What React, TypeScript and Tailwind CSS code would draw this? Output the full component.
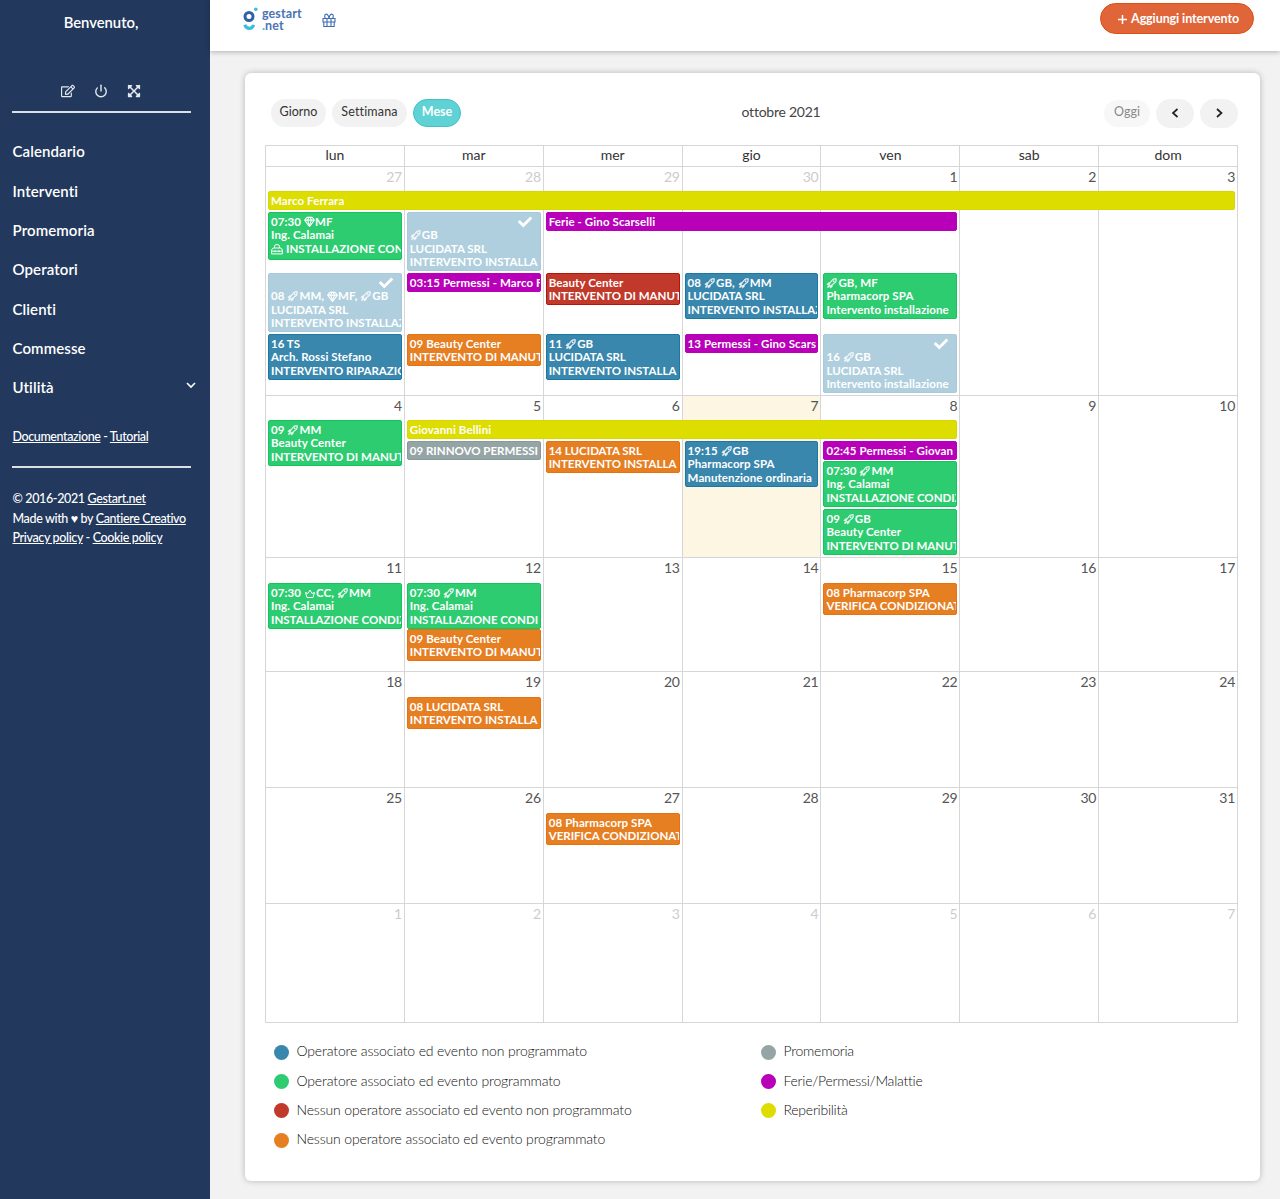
import React from "react";
import { clsx } from "clsx";
import { Gem, Power } from "lucide-react";
import { FaCheck, FaExpandArrowsAlt, FaRegEdit } from "react-icons/fa";
import { LiaRocketSolid } from "react-icons/lia";

type EventColor = "blue" | "green" | "red" | "orange" | "gray" | "purple" | "yellow" | "done";

type CalendarEvent = {
    place: string;
    color: EventColor;
    lines: string[];
    height?: string;
};

type Week = {
    days: number[];
    rows: string;
    today?: number;
    events: CalendarEvent[];
};

const colors: Record<EventColor, string> = {
    blue: "bg-[#3a87ad] border-[#1a78a4]",
    green: "bg-[#2ecc71] border-[#12c65c]",
    red: "bg-[#c0392b] border-[#b51509]",
    orange: "bg-[#e67e22] border-[#e67210]",
    gray: "bg-[#95a5a6] border-[#869a9b]",
    purple: "bg-[#b700b8] border-[#b700b8]",
    yellow: "bg-[#dddd00] border-[#d8d800]",
    done: "bg-[#b0cfde] border-[#a8cadb]",
};

const dayNames = ["lun", "mar", "mer", "gio", "ven", "sab", "dom"];

const columns = [
    "col-start-1",
    "col-start-2",
    "col-start-3",
    "col-start-4",
    "col-start-5",
    "col-start-6",
    "col-start-7",
];

// [r] rocket, [g] gem, [t] toolbox, [c] crown
const weeks: Week[] = [
    {
        days: [27, 28, 29, 30, 1, 2, 3],
        rows: "h-[229px] grid-rows-[24px_21px_61px_61px_1fr]",
        events: [
            { place: "col-start-1 col-span-7 row-start-2", color: "yellow", lines: ["Marco Ferrara"] },
            { place: "col-start-1 row-start-3", color: "green", lines: ["07:30 [g]MF", "Ing. Calamai", "[t] INSTALLAZIONE CON"], height: "h-12" },
            { place: "col-start-2 row-start-3", color: "done", lines: ["[r]GB", "LUCIDATA SRL", "INTERVENTO INSTALLA"] },
            { place: "col-start-3 col-span-3 row-start-3", color: "purple", lines: ["Ferie - Gino Scarselli"] },
            { place: "col-start-1 row-start-4", color: "done", lines: ["08 [r]MM, [g]MF, [r]GB", "LUCIDATA SRL", "INTERVENTO INSTALLAZ"] },
            { place: "col-start-2 row-start-4", color: "purple", lines: ["03:15 Permessi - Marco F"] },
            { place: "col-start-3 row-start-4", color: "red", lines: ["Beauty Center", "INTERVENTO DI MANUT"] },
            { place: "col-start-4 row-start-4", color: "blue", lines: ["08 [r]GB, [r]MM", "LUCIDATA SRL", "INTERVENTO INSTALLAZ"] },
            { place: "col-start-5 row-start-4", color: "green", lines: ["[r]GB, MF", "Pharmacorp SPA", "Intervento installazione"] },
            { place: "col-start-1 row-start-5", color: "blue", lines: ["16 TS", "Arch. Rossi Stefano", "INTERVENTO RIPARAZIO"] },
            { place: "col-start-2 row-start-5", color: "orange", lines: ["09 Beauty Center", "INTERVENTO DI MANUT"] },
            { place: "col-start-3 row-start-5", color: "blue", lines: ["11 [r]GB", "LUCIDATA SRL", "INTERVENTO INSTALLA"] },
            { place: "col-start-4 row-start-5", color: "purple", lines: ["13 Permessi - Gino Scars"] },
            { place: "col-start-5 row-start-5", color: "done", lines: ["16 [r]GB", "LUCIDATA SRL", "Intervento installazione"] },
        ],
    },
    {
        days: [4, 5, 6, 7, 8, 9, 10],
        rows: "h-[162px] grid-rows-[24px_21px_20px_48px_1fr]",
        today: 3,
        events: [
            { place: "col-start-1 row-start-2", color: "green", lines: ["09 [r]MM", "Beauty Center", "INTERVENTO DI MANUT"] },
            { place: "col-start-2 col-span-4 row-start-2", color: "yellow", lines: ["Giovanni Bellini"] },
            { place: "col-start-2 row-start-3", color: "gray", lines: ["09 RINNOVO PERMESSI"] },
            { place: "col-start-3 row-start-3", color: "orange", lines: ["14 LUCIDATA SRL", "INTERVENTO INSTALLA"] },
            { place: "col-start-4 row-start-3", color: "blue", lines: ["19:15 [r]GB", "Pharmacorp SPA", "Manutenzione ordinaria"] },
            { place: "col-start-5 row-start-3", color: "purple", lines: ["02:45 Permessi - Giovan"] },
            { place: "col-start-5 row-start-4", color: "green", lines: ["07:30 [r]MM", "Ing. Calamai", "INSTALLAZIONE CONDIZ"] },
            { place: "col-start-5 row-start-5", color: "green", lines: ["09 [r]GB", "Beauty Center", "INTERVENTO DI MANUT"] },
        ],
    },
    {
        days: [11, 12, 13, 14, 15, 16, 17],
        rows: "h-[114px] grid-rows-[25px_46px_1fr]",
        events: [
            { place: "col-start-1 row-start-2", color: "green", lines: ["07:30 [c]CC, [r]MM", "Ing. Calamai", "INSTALLAZIONE CONDIZ"] },
            { place: "col-start-2 row-start-2", color: "green", lines: ["07:30 [r]MM", "Ing. Calamai", "INSTALLAZIONE CONDI"] },
            { place: "col-start-5 row-start-2", color: "orange", lines: ["08 Pharmacorp SPA", "VERIFICA CONDIZIONAT"] },
            { place: "col-start-2 row-start-3", color: "orange", lines: ["09 Beauty Center", "INTERVENTO DI MANUT"] },
        ],
    },
    {
        days: [18, 19, 20, 21, 22, 23, 24],
        rows: "h-[116px] grid-rows-[25px_1fr]",
        events: [{ place: "col-start-2 row-start-2", color: "orange", lines: ["08 LUCIDATA SRL", "INTERVENTO INSTALLA"] }],
    },
    {
        days: [25, 26, 27, 28, 29, 30, 31],
        rows: "h-[116px] grid-rows-[25px_1fr]",
        events: [{ place: "col-start-3 row-start-2", color: "orange", lines: ["08 Pharmacorp SPA", "VERIFICA CONDIZIONAT"] }],
    },
    {
        days: [1, 2, 3, 4, 5, 6, 7],
        rows: "h-[119px] grid-rows-[25px_1fr]",
        events: [],
    },
];

const legend = [
    [
        { label: "Operatore associato ed evento non programmato", dot: "bg-[#3a87ad]" },
        { label: "Operatore associato ed evento programmato", dot: "bg-[#2ecc71]" },
        { label: "Nessun operatore associato ed evento non programmato", dot: "bg-[#c0392b]" },
        { label: "Nessun operatore associato ed evento programmato", dot: "bg-[#e67e22]" },
    ],
    [
        { label: "Promemoria", dot: "bg-[#95a5a6]" },
        { label: "Ferie/Permessi/Malattie", dot: "bg-[#b700b8]" },
        { label: "Reperibilità", dot: "bg-[#dddd00]" },
    ],
];

const icons: Record<string, React.ReactNode> = {
    "[r]": <LiaRocketSolid className="inline w-3 h-3 -mt-0.5 stroke-current stroke-1" />,
    "[g]": <Gem className="inline w-[11px] h-[11px] -mt-0.5" strokeWidth={2.4} />,
    "[t]": (
        <svg className="inline w-3 h-3 -mt-0.5" viewBox="0 0 12 12" fill="none" stroke="currentColor">
            <path d="M3.5 5V3.5a2.5 2 0 0 1 5 0V5M.6 10.900V7L2 5h8l1.4 2v3.900zM.6 8.200h10.800M4 7.200v2M8 7.200v2" />
        </svg>
    ),
    "[c]": (
        <svg className="inline w-3 h-3 -mt-0.5" viewBox="0 0 12 12" fill="none" stroke="currentColor">
            <path d="M3 10.500h6L10.500 5.500 8 6.500 6 3 4 6.500 1.500 5.500z" />
        </svg>
    ),
};

const EventLine = ({ text }: { text: string }) => (
    <div className={clsx("whitespace-pre", text !== text.toUpperCase() && "tracking-[0.1px]")}>
        {text.split(/(\[[rgtc]\])/).map((part, i) => (
            <React.Fragment key={i}>{icons[part] ?? part}</React.Fragment>
        ))}
    </div>
);

const EventBox = ({ event }: { event: CalendarEvent }) => (
    <div
        className={clsx(
            "z-10 self-start overflow-hidden rounded-[2px] border ml-[3px] mr-[2px] pl-[2px] py-[1.5px] text-white text-[11.5px] leading-[13.6px] font-bold",
            event.place,
            event.height,
            colors[event.color]
        )}
    >
        {event.color === "done" && (
            <div className="h-[13.6px] flex justify-end pr-[8px]">
                <FaCheck className="w-3.5 h-3.5" />
            </div>
        )}
        {event.lines.map((line) => (
            <EventLine key={line} text={line} />
        ))}
    </div>
);

const WeekRow = ({ week, index }: { week: Week; index: number }) => (
    <div className={clsx("grid grid-cols-7 border-t border-[#d6d6d6]", week.rows)}>
        {week.days.map((day, i) => {
            const otherMonth = (index === 0 && day > 20) || index === 5;
            return (
                <div
                    key={i}
                    className={clsx(
                        "row-start-1 -row-end-1 border-l border-[#d6d6d6] pr-[2px] text-right text-[14px] leading-[20px] tracking-[-0.3px]",
                        columns[i],
                        otherMonth ? "text-[#cccccc]" : "text-[#555555]",
                        week.today === i && "bg-[#fdf6e2]"
                    )}
                >
                    {day}
                </div>
            );
        })}
        {week.events.map((event, i) => (
            <EventBox key={i} event={event} />
        ))}
    </div>
);

const Sidebar = () => (
    <aside className="w-[210px] shrink-0 bg-[#22395d] text-white">
        <div className="h-[45px] flex items-center justify-center pr-2 text-[14.8px] font-semibold">Benvenuto,</div>
        <div className="mt-[37px] mr-[8px] h-[18px] flex items-center justify-center gap-[19px] text-[#e4e8ee]">
            <FaRegEdit className="w-3.5 h-3.5" />
            <Power className="w-3.5 h-3.5" strokeWidth={2.4} />
            <FaExpandArrowsAlt className="w-3.5 h-3.5" />
        </div>
        <div className="mt-[11px] ml-[12px] w-[179px] h-[2px] bg-[#dcdfe5]" />
        <nav className="mt-[19px] pl-[12.5px] text-[15px] font-semibold tracking-[0.1px]">
            {["Calendario", "Interventi", "Promemoria", "Operatori", "Clienti", "Commesse", "Utilità"].map((item) => (
                <div key={item} className="h-[39.3px] flex items-center justify-between pr-[14px]">
                    {item}
                    {item === "Utilità" && (
                        <svg className="w-[10px] h-[7px] mb-1" viewBox="0 0 10 7" fill="none" stroke="currentColor" strokeWidth="1.6">
                            <path d="M1 1l4 4 4-4" />
                        </svg>
                    )}
                </div>
            ))}
        </nav>
        <div className="mt-[20px] pl-[12.5px] text-[12.5px] leading-[20px] font-medium tracking-[-0.4px]">
            <span className="underline">Documentazione</span> - <span className="underline">Tutorial</span>
        </div>
        <div className="mt-[19px] ml-[12px] w-[179px] h-[2px] bg-[#dcdfe5]" />
        <div className="mt-[21px] pl-[12.5px] text-[12.5px] leading-[19.7px] font-medium tracking-[-0.36px] whitespace-nowrap">
            <div>© 2016-2021 <span className="underline">Gestart.net</span></div>
            <div>Made with ♥ by <span className="underline">Cantiere Creativo</span></div>
            <div><span className="underline">Privacy policy</span> - <span className="underline">Cookie policy</span></div>
        </div>
    </aside>
);

const Logo = () => (
    <div className="flex items-start gap-[4px]">
        <svg className="w-[15px] h-[25px]" viewBox="0 0 15 25" fill="none">
            <circle cx="6" cy="9.5" r="4" stroke="#2f62a8" strokeWidth="3" />
            <circle cx="12.8" cy="2.300" r="1.8" fill="#37bfdc" />
            <path d="M1.8 17.800c1.500 4.800 7.500 4.800 8.800 0" stroke="#37bfdc" strokeWidth="3.2" />
        </svg>
        <div className="pt-[1px] text-[12.5px] leading-[12px] font-bold tracking-[0.1px] text-[#4a74b4]">
            <div>gestart</div>
            <div><span className="text-[#37bfdc]">.</span>net</div>
        </div>
    </div>
);

const GiftIcon = () => (
    <svg className="ml-[20px] mt-[6px] w-[14px] h-[15px]" viewBox="0 0 14 15" fill="none" stroke="#3f6db2" strokeWidth="1.1">
        <path d="M1 5.500h12v3.500H1zM1.800 9v4.500h10.400V9M5 5.500v8M9 5.500v8" />
        <path d="M7 5.500C6.500 2 5 .8 3.800 1.200 2.200 1.800 2.500 4 3.500 5.500M7 5.500C7.500 2 9 .8 10.200 1.200c1.600.6 1.300 2.800.3 4.300" />
    </svg>
);

const Header = () => (
    <header className="h-[51px] shrink-0 z-10 bg-white shadow-[0_1px_5px_rgba(0,0,0,0.28)] flex items-start justify-between pl-[33px] pr-[26px]">
        <div className="flex items-start pt-[7px]">
            <Logo />
            <GiftIcon />
        </div>
        <button className="mt-[3px] h-[31px] w-[154px] flex items-center justify-end gap-[4px] pr-[14px] rounded-full border border-[#dd4f12] bg-[#e06639] text-white text-[12.5px] font-bold tracking-[-0.1px] whitespace-nowrap">
            <svg className="w-[9px] h-[9px] mt-[2px]" viewBox="0 0 9 9" stroke="currentColor" strokeWidth="1.5">
                <path d="M4.500 0v9M0 4.500h9" />
            </svg>
            <span className="pt-[1px]">Aggiungi intervento</span>
        </button>
    </header>
);

const Toolbar = () => (
    <div className="flex items-center justify-between h-[28px] pl-[6px] text-[12.5px] text-[#333333]">
        <div className="flex gap-[6px] w-[270px]">
            <button className="w-[55px] h-[28px] pb-[1px] rounded-full bg-[#f2f2f2]">Giorno</button>
            <button className="w-[75px] h-[28px] pb-[1px] rounded-full bg-[#f2f2f2] tracking-[0.15px]">Settimana</button>
            <button className="w-[48px] h-[28px] pb-[1px] rounded-full border border-[#45c1c3] bg-[#5ed2d4] text-white font-bold">Mese</button>
        </div>
        <div className="pb-[4px] text-[14px] tracking-[-0.25px] text-[#444444]">ottobre 2021</div>
        <div className="flex items-center justify-end gap-[6px] w-[201px] ml-[16px]">
            <button className="w-[46px] h-[27px] pb-[1px] rounded-full bg-[#f7f7f7] text-[#888888]">Oggi</button>
            {["M6.500 1L2 5l4.500 4", "M2 1l4.500 4L2 9"].map((d) => (
                <button key={d} className="w-[38px] h-[29px] pb-[1px] rounded-full bg-[#f2f2f2] flex items-center justify-center">
                    <svg className="w-[8px] h-[10px]" viewBox="0 0 8 10" fill="none" stroke="#222222" strokeWidth="1.7">
                        <path d={d} />
                    </svg>
                </button>
            ))}
        </div>
    </div>
);

const App = () => {
    return (
        <div className="flex w-[1280px] h-[1199px] overflow-hidden bg-[#f2f2f2] font-['Lato','Noto_Sans',sans-serif]">
            <Sidebar />
            <div className="flex-1 flex flex-col">
                <Header />
                <main className="mt-[22px] ml-[35px] w-[1015px] h-[1108px] rounded-md bg-white shadow-[0_0_6px_rgba(0,0,0,0.25)] pt-[26px] pl-[20px] pr-[22px]">
                    <Toolbar />
                    <div className="mt-[18px] border-r border-b border-t border-[#d6d6d6] w-[973px]">
                        <div className="grid grid-cols-7 h-[20px]">
                            {dayNames.map((name) => (
                                <div key={name} className="border-l border-[#d6d6d6] text-center text-[14px] leading-[18px] text-[#333333]">
                                    {name}
                                </div>
                            ))}
                        </div>
                        {weeks.map((week, i) => (
                            <WeekRow key={i} week={week} index={i} />
                        ))}
                    </div>
                    <div className="mt-[13px] grid grid-cols-[487px_1fr] pl-[9px] text-[14px] text-[#111111] font-light">
                        {legend.map((group, i) => (
                            <div key={i} className={i === 0 ? "tracking-[-0.14px]" : "tracking-[-0.25px]"}>
                                {group.map((item) => (
                                    <div key={item.label} className="h-[29.4px] flex items-center">
                                        <span className={clsx("w-[15px] h-[15px] mt-[3px] mr-[7.5px] rounded-full", item.dot)} />
                                        {item.label}
                                    </div>
                                ))}
                            </div>
                        ))}
                    </div>
                </main>
            </div>
        </div>
    );
};

export default App;
